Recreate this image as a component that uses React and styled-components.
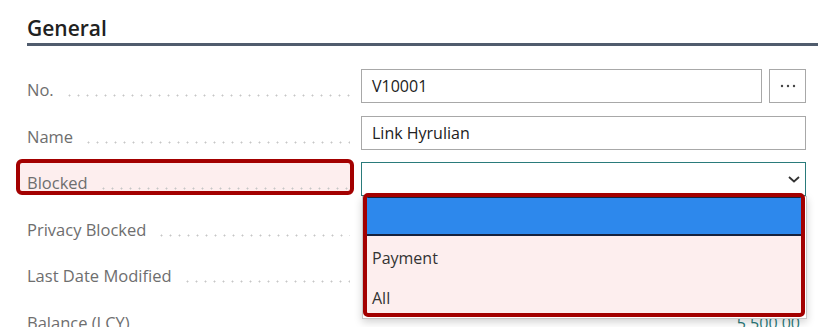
import React from 'react';
import styled, { createGlobalStyle } from 'styled-components';

const GlobalStyle = createGlobalStyle`
  html, body {
    margin: 0;
    padding: 0;
    background: #ffffff;
  }
  body {
    font-family: "Open Sans", "Noto Sans", Arial, sans-serif;
    overflow: hidden;
  }
`;

const Page = styled.div`
  width: 818px;
  height: 327px;
  padding-left: 27px;
  box-sizing: border-box;
  overflow: hidden;
`;

const Header = styled.h2`
  margin: 0;
  padding: 14px 0 1px;
  font-size: 21px;
  font-weight: 600;
  line-height: 28px;
  color: #212121;
  border-bottom: 3px solid #505c6d;
`;

const Fields = styled.div`
  display: grid;
  grid-template-columns: 323px 445px;
  column-gap: 11px;
  grid-auto-rows: 34px;
  row-gap: 12.5px;
  margin-top: 23px;
`;

const LabelCell = styled.div`
  position: relative;
  display: flex;
  align-items: flex-start;
  padding-top: 11px;
  box-sizing: border-box;
`;

const LabelText = styled.span`
  position: relative;
  z-index: 1;
  font-size: 16.5px;
  line-height: 20px;
  color: #6e6e6e;
  white-space: nowrap;
`;

const Leader = styled.span`
  position: relative;
  z-index: 1;
  flex: 1;
  height: 20px;
  margin-left: 11px;
  background-image: radial-gradient(circle, #c6c6c6 0.8px, transparent 1.2px);
  background-size: 9px 3px;
  background-repeat: repeat-x;
  background-position: 0 14px;
`;

const Highlight = styled.div`
  position: absolute;
  left: -11px;
  right: -4px;
  top: -3px;
  bottom: 1px;
  border: 4px solid #a30000;
  border-radius: 6px;
  background: #fdeeee;
`;

const ControlCell = styled.div`
  position: relative;
  display: flex;
  gap: 7px;
`;

const TextBox = styled.div`
  flex: 1;
  display: flex;
  align-items: center;
  padding: 0 10px;
  border: 1px solid ${p => (p.$focused ? '#2a7b7b' : '#a8a8a8')};
  font-size: 16px;
  color: #212121;
  box-sizing: border-box;
  justify-content: ${p => (p.$select ? 'flex-end' : 'flex-start')};
`;

const AssistButton = styled.button`
  width: 37px;
  padding: 0;
  border: 1px solid #a8a8a8;
  background: #ffffff;
  display: flex;
  align-items: center;
  justify-content: center;
`;

const Value = styled.div`
  flex: 1;
  text-align: right;
  padding: 11px 6px 0 0;
  font-size: 16px;
  line-height: 20px;
  color: #2a7a7a;
`;

const Popup = styled.div`
  position: absolute;
  top: 34px;
  left: 1px;
  right: -1px;
  height: 121px;
  border: 1px solid #c8c8c8;
  background: #ffffff;
  box-shadow: 0 3px 8px rgba(0, 0, 0, 0.18);
  z-index: 5;
`;

const Callout = styled.div`
  position: absolute;
  top: 31px;
  left: 2px;
  right: 1px;
  height: 124px;
  border: 4px solid #a30000;
  border-radius: 5px;
  background: #fdeeee;
  box-sizing: border-box;
  overflow: hidden;
  z-index: 6;
`;

const Option = styled.div`
  height: ${p => (p.$selected ? '39px' : '40px')};
  display: flex;
  align-items: center;
  padding-left: 5px;
  font-size: 16px;
  color: #333333;
  box-sizing: border-box;
  background: ${p => (p.$selected ? '#2d88ec' : 'transparent')};
  border-top: ${p => (p.$selected ? '1px solid #16213d' : 'none')};
  border-bottom: ${p => (p.$selected ? '2px solid #16213d' : 'none')};
  margin-bottom: ${p => (p.$selected ? '2px' : '0')};
`;

const Chevron = () => (
  <svg width="12" height="7" viewBox="0 0 12 7" style={{ marginRight: -5 }}>
    <path d="M1 1 L6 5.5 L11 1" fill="none" stroke="#333" strokeWidth="1.8" />
  </svg>
);

const Dots = () => (
  <svg width="18" height="4" viewBox="0 0 18 4">
    <circle cx="3" cy="2" r="1.2" fill="#444" />
    <circle cx="9" cy="2" r="1.2" fill="#444" />
    <circle cx="15" cy="2" r="1.2" fill="#444" />
  </svg>
);

const Label = ({ children, highlighted }) => (
  <LabelCell>
    {highlighted && <Highlight />}
    <LabelText>{children}</LabelText>
    <Leader />
  </LabelCell>
);

export default function App() {
  return (
    <Page>
      <GlobalStyle />
      <Header>General</Header>
      <Fields>
        <Label>No.</Label>
        <ControlCell>
          <TextBox>V10001</TextBox>
          <AssistButton><Dots /></AssistButton>
        </ControlCell>

        <Label>Name</Label>
        <ControlCell>
          <TextBox>Link Hyrulian</TextBox>
        </ControlCell>

        <Label highlighted>Blocked</Label>
        <ControlCell>
          <TextBox $focused $select><Chevron /></TextBox>
          <Popup />
          <Callout>
            <Option $selected />
            <Option>Payment</Option>
            <Option>All</Option>
          </Callout>
        </ControlCell>

        <Label>Privacy Blocked</Label>
        <ControlCell />

        <Label>Last Date Modified</Label>
        <ControlCell />

        <Label>Balance (LCY)</Label>
        <ControlCell>
          <Value>5.500,00</Value>
        </ControlCell>
      </Fields>
    </Page>
  );
}
